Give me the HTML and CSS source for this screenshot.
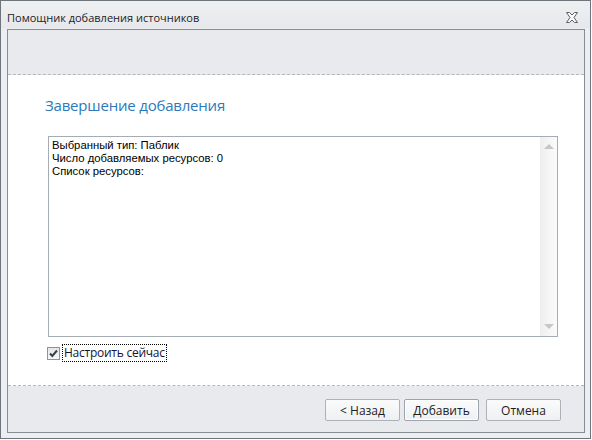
FILE: index.html
```html
<!DOCTYPE html>
<html lang="ru">
<head>
<meta charset="utf-8">
<title>Помощник добавления источников</title>
<link rel="stylesheet" href="styles.css">
</head>
<body>
<div class="window">
  <div class="titlebar">
    <span class="title">Помощник добавления источников</span>
    <button class="close" aria-label="Закрыть">
      <svg width="12" height="11" viewBox="0 0 12 11">
        <path d="M0.5 0.5 H3.5 L6 3 L8.5 0.5 H11.5 L8 5.5 L11.5 10.5 H8.5 L6 8 L3.5 10.5 H0.5 L4 5.5 Z" fill="#fafafa" stroke="#5a5f66" stroke-width="1" stroke-linejoin="miter"/>
      </svg>
    </button>
  </div>
  <div class="frame">
    <div class="header"></div>
    <div class="content">
      <h1 class="heading">Завершение добавления</h1>
      <div class="memo">
        <div class="memo-text">
          <div>Выбранный тип: Паблик</div>
          <div>Число добавляемых ресурсов: 0</div>
          <div>Список ресурсов:</div>
        </div>
        <div class="vscroll">
          <span class="arrow up"></span>
          <span class="arrow down"></span>
        </div>
      </div>
      <label class="check">
        <span class="box">
          <svg width="11" height="11" viewBox="0 0 11 11">
            <path d="M2 5.5 L4.3 8 L9 2.5" fill="none" stroke="#3c3f44" stroke-width="2"/>
          </svg>
        </span>
        <span class="check-label">Настроить сейчас</span>
      </label>
    </div>
    <div class="footer">
      <button class="btn">&lt; Назад</button>
      <button class="btn btn-default">Добавить</button>
      <button class="btn">Отмена</button>
    </div>
  </div>
</div>
</body>
</html>
```

FILE: styles.css
```css
html, body {
  margin: 0;
  padding: 0;
  background: #ffffff;
}

.window {
  box-sizing: border-box;
  width: 591px;
  height: 439px;
  border: 1px solid #6e747c;
  background: #eceef1;
  display: flex;
  flex-direction: column;
  font-family: "Open Sans", "Noto Sans", sans-serif;
}

.titlebar {
  height: 27px;
  display: flex;
  align-items: center;
  justify-content: space-between;
  padding: 0 12px 0 6px;
  background: linear-gradient(#eff0f2, #e6e8eb);
}

.title {
  font-size: 11px;
  color: #202327;
  padding-top: 6px;
}

.close {
  border: 0;
  background: none;
  padding: 0;
  margin-top: 6px;
  width: 12px;
  height: 11px;
  display: block;
}
.close svg { display: block; }

.frame {
  flex: 1;
  margin: 1px 5px 5px 6px;
  border: 1px solid #878d95;
  display: flex;
  flex-direction: column;
  background: #e8eaee;
}

.header {
  height: 44px;
  border-bottom: 1px dashed #b3b8c0;
}

.content {
  flex: 1;
  background: #ffffff;
  border-bottom: 1px dashed #b3b8c0;
  padding: 0 0 0 40px;
  display: flex;
  flex-direction: column;
}

.heading {
  margin: 20px 0 0 -3px;
  font-size: 15px;
  line-height: 21px;
  letter-spacing: -0.2px;
  font-weight: normal;
  color: #2d79b9;
}

.memo {
  margin-top: 20px;
  box-sizing: border-box;
  width: 510px;
  height: 201px;
  border: 1px solid #a6acb4;
  display: flex;
  background: #ffffff;
}

.memo-text {
  flex: 1;
  padding: 2px 3px;
  font-family: "Liberation Sans", Arial, sans-serif;
  font-size: 11.3px;
  line-height: 13px;
  color: #000000;
}

.vscroll {
  width: 17px;
  background: linear-gradient(to right, #eeeeee, #fbfbfb);
  position: relative;
}

.arrow {
  position: absolute;
  left: 4px;
  width: 0;
  height: 0;
  border-left: 5px solid transparent;
  border-right: 5px solid transparent;
}
.arrow.up {
  top: 7px;
  border-bottom: 5px solid #c3c6ca;
}
.arrow.down {
  bottom: 7px;
  border-top: 5px solid #c3c6ca;
}

.check {
  margin-top: 8px;
  margin-left: -1px;
  display: flex;
  align-items: center;
  gap: 3px;
}

.box {
  box-sizing: border-box;
  width: 13px;
  height: 13px;
  border: 1px solid #8e949c;
  background: linear-gradient(#e4e6e9, #f6f7f8);
  display: flex;
  align-items: center;
  justify-content: center;
}
.box svg { display: block; }

.check-label {
  font-size: 12px;
  line-height: 14px;
  letter-spacing: -0.25px;
  color: #131336;
  outline: 1px dotted #000000;
  outline-offset: 0;
  padding: 1px 1px 1px 1px;
}

.footer {
  height: 46px;
  display: flex;
  justify-content: flex-end;
  align-items: flex-start;
  padding: 13px 23px 0 0;
  box-sizing: border-box;
}

.btn {
  box-sizing: border-box;
  width: 75px;
  height: 22px;
  border: 1px solid #adb2b9;
  border-radius: 2px;
  background: linear-gradient(#fbfbfc, #eef0f2);
  font-family: "Open Sans", "Noto Sans", sans-serif;
  font-size: 12px;
  color: #1e2124;
  padding: 0;
}

.btn + .btn {
  margin-left: 7px;
}

.btn-default {
  margin-left: 4px !important;
  border-color: #9da3ab;
  box-shadow: inset 0 0 0 1px #ffffff;
}
```
